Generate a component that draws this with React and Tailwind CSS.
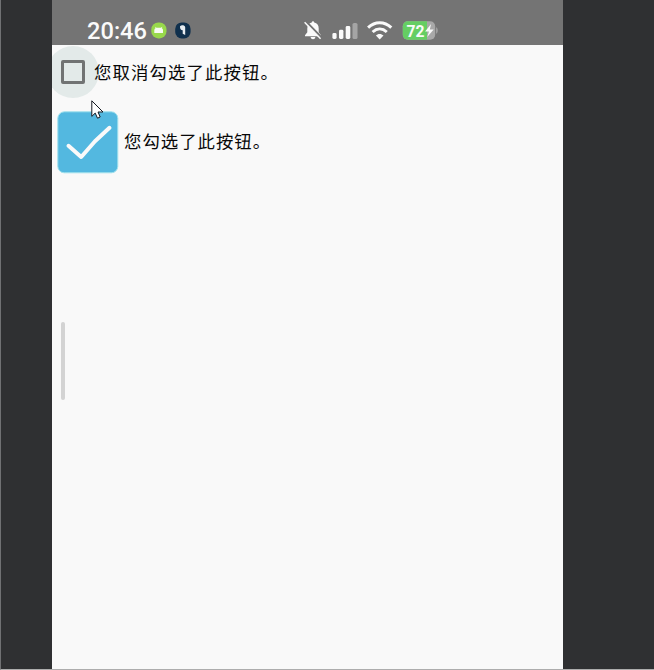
function StatusBar() {
  return (
    <header className="flex h-[45px] shrink-0 items-start bg-[#747474] pl-[35px] pt-[17px] text-[#fafafa]">
      <svg className="h-[27px] w-[61px] shrink-0" viewBox="0 0 61 27">
        <text x="0" y="22.4" textLength="60" lengthAdjust="spacingAndGlyphs" fill="#fafafa" className="font-['Roboto'] text-[23.5px] font-medium">20:46</text>
      </svg>
      <svg className="ml-[3px] mt-[5px] shrink-0" width="16" height="17" viewBox="0 0 16 17">
        <rect x="0.3" y="0.4" width="15.2" height="16" rx="7" fill="#98d84b" />
        <path d="M3.3 11V8.4C3.3 7.2 3.8 6.6 4.6 6.2L4 4.8L5.5 5.7H9.8L11.4 4.8L10.8 6.2C11.8 6.8 12 7.4 12 8.4V11Z" fill="#f7fbf1" />
      </svg>
      <svg className="ml-[8px] mt-[5px] shrink-0" width="16" height="17" viewBox="0 0 16 17">
        <rect x="0.2" y="0.4" width="15.4" height="16" rx="6.5" fill="#10304d" />
        <path d="M5 4.2C6.6 2.8 9.7 3.2 10.2 5.2V13L7.7 11.8V8.2C5.8 8.2 4.9 6.8 5 4.2Z" fill="#e8edf1" />
      </svg>
      <svg className="ml-[112px] mt-[3px] shrink-0" width="20" height="21" viewBox="0 0 20 21">
        <path d="M10 1.2C10.8 1.2 11.2 1.8 11.2 2.6C14.2 3.2 15.7 5.6 15.7 8.5V12.2L18 15.3V16.3H2V15.3L4.3 12.2V8.5C4.3 5.6 5.8 3.2 8.8 2.6C8.8 1.8 9.2 1.2 10 1.2Z" fill="#fafafa" />
        <path d="M7.6 17H12.4C12 20 8 20 7.6 17Z" fill="#fafafa" />
        <path d="M3 1.4L19 18" stroke="#747474" strokeWidth="2.2" />
        <path d="M1.6 2.2L17.6 18.8" stroke="#fafafa" strokeWidth="1.5" />
      </svg>
      <svg className="ml-[9px] mt-[5px] shrink-0" width="27" height="18" viewBox="0 0 27 18">
        <rect x="0.4" y="11" width="4.2" height="6" rx="1.4" fill="#fafafa" />
        <rect x="7" y="7.8" width="4.4" height="9.2" rx="1.4" fill="#fafafa" />
        <rect x="13.7" y="4" width="4.6" height="13" rx="1.4" fill="#fafafa" />
        <rect x="20.5" y="1" width="5" height="16" rx="1.6" fill="#a5a5a5" />
      </svg>
      <svg className="ml-[7px] mt-[3px] shrink-0" width="28" height="21" viewBox="0 0 28 21" fill="none" stroke="#fafafa" strokeWidth="3">
        <path d="M2.1 7.6C9 1 18.4 1 25.3 7.6" />
        <path d="M6.6 12C10.9 8.1 16.5 8.1 20.8 12" />
        <path d="M9.9 15.6C11.8 13.4 15.4 13.4 17.5 15.6L13.7 19.6Z" fill="#fafafa" stroke="none" />
      </svg>
      <svg className="ml-[8px] mt-[3px] shrink-0" width="37" height="21" viewBox="0 0 37 21">
        <defs>
          <clipPath id="battery">
            <rect x="0.8" y="1.2" width="32.4" height="18.6" rx="5" />
          </clipPath>
        </defs>
        <g clipPath="url(#battery)">
          <rect width="34" height="21" fill="#a8a8a8" />
          <rect width="25" height="21" fill="#65ce63" />
        </g>
        <path d="M34.2 7.2C36.2 8 36.2 13 34.2 13.8Z" fill="#a8a8a8" />
        <text x="4.6" y="16.6" textLength="18" lengthAdjust="spacingAndGlyphs" fill="#fafafa" className="font-['Roboto'] text-[17px] font-bold">72</text>
        <path d="M29.1 4L23.1 11.5H27L25.2 17L31.7 9.4H27.8Z" fill="#fafafa" />
      </svg>
    </header>
  );
}

export default function App() {
  return (
    <div className="flex h-[670px] w-[654px] overflow-hidden border-b border-l border-b-[#adadad] border-l-[#707173] bg-[#2f3032]">
      <section className="ml-[51px] flex w-[511px] flex-col bg-[#f9f9f9]">
        <StatusBar />
        <main className="relative flex-1 overflow-hidden font-['Noto_Sans_CJK_SC',sans-serif] text-[17.4px] leading-[26px] tracking-[1.1px] text-[#080808]">
          <label className="flex h-[54px] items-center">
            <span className="-ml-[5px] flex size-[52px] shrink-0 items-center justify-center rounded-full bg-[#e3eae9]">
              <span className="size-[24px] rounded-[2px] border-[3px] border-[#717373] bg-[#e3eae9]" />
            </span>
            <span className="ml-[-5px] whitespace-nowrap">您取消勾选了此按钮。</span>
          </label>
          <label className="mt-3 flex h-[62px] items-center pl-[5px]">
            <svg className="shrink-0" width="62" height="63" viewBox="0 0 62 63">
              <rect x="0.8" y="0.8" width="60" height="61" rx="6.5" fill="#53b8e0" stroke="#a2e2ed" strokeWidth="1" />
              <path d="M11.5 34.8L24.2 46L38 30.3L52.5 16.8" fill="none" stroke="#fafafa" strokeWidth="4" strokeLinecap="round" strokeLinejoin="round" />
            </svg>
            <span className="-mt-0.5 ml-[5px] whitespace-nowrap tracking-[1px]">您勾选了此按钮。</span>
          </label>
          <span className="ml-[9px] mt-[149px] block h-[78px] w-1 rounded-full bg-[#d3d3d3]" />
          <svg className="absolute left-[39px] top-[55px]" width="14" height="20" viewBox="0 0 14 20">
            <path d="M0.8 0.8V16.4L4.2 13.1L6.5 18.2L9.2 17L7 12H12Z" fill="#fff" stroke="#141820" strokeWidth="1" />
          </svg>
        </main>
      </section>
    </div>
  );
}
